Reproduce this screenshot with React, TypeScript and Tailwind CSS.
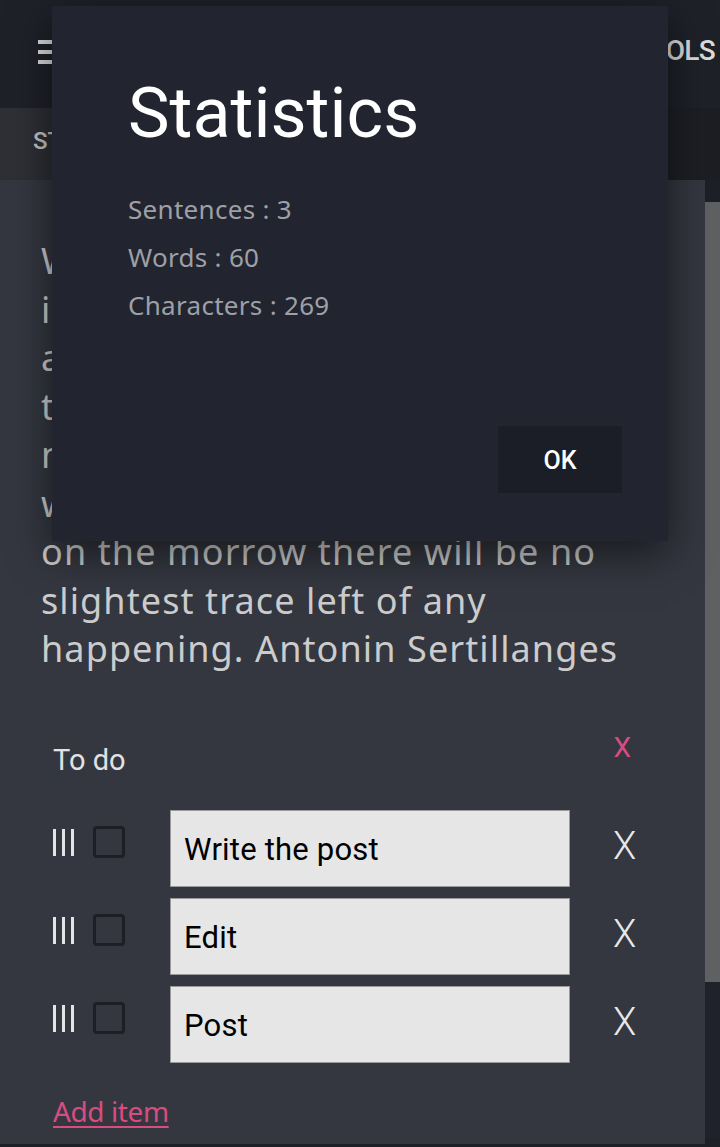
const quoteLines = [
  "Work is a living thing, and all",
  "is carried forward by it in one",
  "a single stream; yet we fancy",
  "that what we do today counts",
  "nothing, and whatever we do",
  "will vanish like a wave, so that",
  "on the morrow there will be no",
  "slightest trace left of any",
  "happening. Antonin Sertillanges",
];

const todos = ["Write the post", "Edit", "Post"];

const roboto = "font-['Roboto',sans-serif]";
const humanist = "font-['Noto_Sans',sans-serif]";

function Grip() {
  return (
    <div className="flex h-[28px] w-[22px] shrink-0 gap-[6px] pt-[1px]">
      <span className="h-full w-[3px] bg-[#e4e4e4]" />
      <span className="h-full w-[3px] bg-[#e4e4e4]" />
      <span className="h-full w-[3px] bg-[#e4e4e4]" />
    </div>
  );
}

function TodoRow({ text }: { text: string }) {
  return (
    <div className="flex h-[77px] items-start">
      <div className="flex w-[170px] shrink-0 items-center gap-[18px] pl-[53px] pt-[16px]">
        <Grip />
        <span className="h-[32px] w-[32px] shrink-0 rounded-[4px] border-[3px] border-[#1d1f26]" />
      </div>
      <div
        className={`flex h-[77px] w-[400px] shrink-0 items-center border border-[#9a9a9a] bg-[#e6e6e6] pl-[13px] pt-[3px] text-[31px] tracking-[0.2px] text-black ${roboto}`}
      >
        {text}
      </div>
      <span className={`ml-[43px] pt-[17px] text-[38px] font-light leading-none text-[#e8e8e8] ${roboto}`}>X</span>
    </div>
  );
}

export default function App() {
  return (
    <div className="relative h-[1147px] w-[720px] overflow-hidden bg-[#1e2027]">
      {/* app bar */}
      <header className="flex h-[108px] items-center justify-between bg-[#1f2129] pl-[38px] pr-[5px] shadow-[0_2px_4px_rgba(0,0,0,0.4)]">
        <div className="flex w-[16px] flex-col gap-[6px] pb-[4px]">
          <span className="h-[4px] w-full bg-[#dcdcdc]" />
          <span className="h-[4px] w-full bg-[#dcdcdc]" />
          <span className="h-[4px] w-full bg-[#dcdcdc]" />
        </div>
        <span className={`pb-[6px] text-[28px] font-medium tracking-tight text-[#dcdcdc] ${roboto}`}>TOOLS</span>
      </header>

      {/* tab strip */}
      <div className="flex h-[72px] items-center bg-gradient-to-r from-[#2e3036] to-[#1c1e23] pl-[33px]">
        <span className={`pb-[6px] text-[24px] font-medium text-[#c4c4c4] ${roboto}`}>STATISTICS</span>
      </div>

      {/* content */}
      <div className="flex">
        <main className="w-[705px] bg-[#343740] pb-[12px]">
          <p className={`px-[41px] pt-[57px] text-[36px] leading-[48.5px] tracking-[1.1px] text-[#cccccc] ${humanist}`}>
            {quoteLines.map((l, i) => (
              <span key={i} className="block whitespace-nowrap">
                {l}
              </span>
            ))}
          </p>

          <section className="mt-[50px]">
            <div className="flex items-start justify-between pl-[53px] pr-[74px]">
              <span className={`pt-[15px] text-[29px] text-[#e2e2e2] ${roboto}`}>To do</span>
              <span className={`pt-[3px] text-[28px] text-[#d94c80] ${roboto}`}>X</span>
            </div>
            <div className="mt-[28px] flex flex-col gap-[11px]">
              {todos.map((t) => (
                <TodoRow key={t} text={t} />
              ))}
            </div>
            <a
              href="#"
              className={`ml-[53px] mt-[27px] inline-block text-[28px] tracking-[-0.4px] text-[#d94c80] underline decoration-[2px] underline-offset-[4px] ${humanist}`}
            >
              Add item
            </a>
          </section>
        </main>
        <div className="flex w-[15px] flex-col pt-[22px]">
          <div className="h-[780px] bg-[#5f6061]" />
          <div className="h-[156px] bg-[#20222b]" />
        </div>
      </div>

      {/* statistics dialog */}
      <div className="absolute left-[52px] top-[6px] flex h-[535px] w-[616px] flex-col bg-[#22242f] shadow-[0_12px_40px_rgba(0,0,0,0.55)]">
        <h1 className={`pl-[76px] pt-[72px] text-[70px] leading-none text-white ${roboto}`}>Statistics</h1>
        <div className={`mt-[44px] flex flex-col gap-[14px] pl-[76px] text-[26px] leading-[34px] tracking-[0.3px] text-[#9ea0a7] ${humanist}`}>
          <span>Sentences : 3</span>
          <span>Words : 60</span>
          <span>Characters : 269</span>
        </div>
        <div className="mt-auto flex justify-end pb-[48px] pr-[46px]">
          <button className={`h-[67px] w-[124px] bg-[#1c1e27] pt-[3px] text-[25px] font-medium text-white ${roboto}`}>OK</button>
        </div>
      </div>
    </div>
  );
}
